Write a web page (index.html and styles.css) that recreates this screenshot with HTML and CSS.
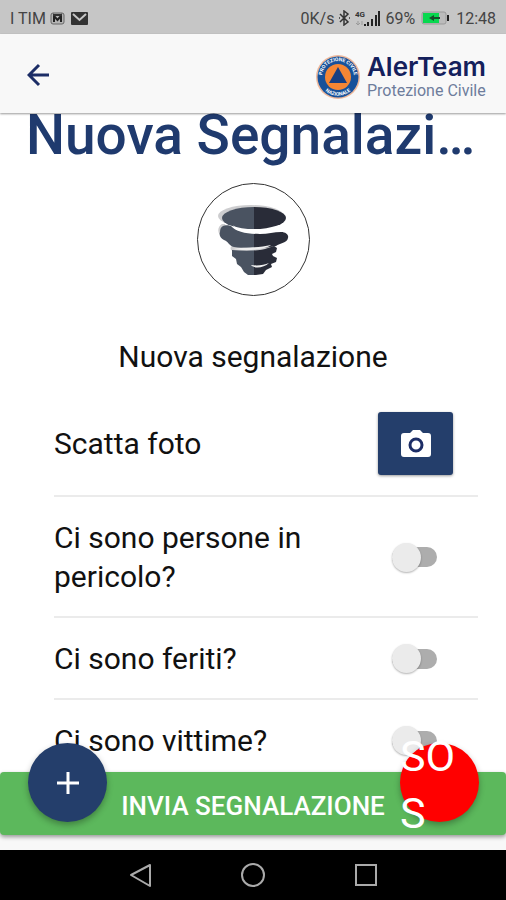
FILE: index.html
```html
<!DOCTYPE html>
<html lang="it">
<head>
  <meta charset="UTF-8">
  <meta name="viewport" content="width=device-width, initial-scale=1.0">
  <title>Nuova Segnalazione</title>
  <link rel="stylesheet" href="styles.css">
</head>
<body>
  <div class="status-bar">
    <div class="status-group">
      <span>I TIM</span>
      <svg width="15" height="13" viewBox="0 0 15 13"><rect x="1" y="1" width="13" height="11" rx="2" fill="#b5b5b5" stroke="#666"/><path d="M4 10V4l3.500 4L11 4v6" fill="none" stroke="#222" stroke-width="2"/><path d="M3 3h9" stroke="#333" stroke-width="2"/></svg>
      <svg class="mail" width="17" height="13" viewBox="0 0 17 13"><rect width="17" height="13" rx="1" fill="#333"/><path d="M2 2l6.500 6L15 2" fill="none" stroke="#c6c6c6" stroke-width="2"/></svg>
    </div>
    <div class="status-group">
      <span>0K/s</span>
      <svg width="13" height="16" viewBox="0 0 13 16"><path d="M2 4l8 8-4 3V1l4 3-8 8M1 8h1M11 8h1" fill="none" stroke="#333" stroke-width="1.500"/></svg>
      <svg width="26" height="17" viewBox="0 0 26 17"><text x="0" y="7" class="net">4G</text><path d="M3 11v4M1 13l2 2 2-2M7 15v-4" fill="none" stroke="#999"/><path d="M10 16v-2M13 16v-4M17 16V9M21 16V5M24 16V1" stroke="#222" stroke-width="2"/></svg>
      <span>69%</span>
      <svg class="battery" width="29" height="14" viewBox="0 0 29 14"><rect x="1" y="1" width="24" height="12" rx="2" fill="#bbb" stroke="#999"/><rect x="2" y="2" width="16" height="10" fill="#08d84f"/><path d="M8 7l5-3v2h6v2h-6v2z" fill="#174f2b"/><path d="M27 4v6" stroke="#222" stroke-width="2"/></svg>
      <span>12:48</span>
    </div>
  </div>

  <header class="toolbar">
    <a href="#" class="back" aria-label="Indietro">
      <svg width="24" height="24" viewBox="0 0 24 24"><path d="M12 2L2 12l10 10M2 12h20" fill="none" stroke="#1c2d66" stroke-width="3"/></svg>
    </a>
    <a href="#" class="logo">
      <svg width="46" height="46" viewBox="0 0 46 46">
        <circle cx="23" cy="23" r="22" fill="#eeb99c"/>
        <circle cx="23" cy="23" r="20.500" fill="#17519a"/>
        <circle cx="23" cy="23" r="13" fill="#f58634"/>
        <path d="M23 13l9 16H14z" fill="#173f82"/>
        <path id="arco-alto" d="M7.500 27A16 16 0 1 1 38.500 27" fill="none"/>
        <path id="arco-basso" d="M7 33A19 19 0 0 0 39 33" fill="none"/>
        <text class="seal"><textPath href="#arco-alto" startOffset="50%">PROTEZIONE CIVILE</textPath></text>
        <text class="seal"><textPath href="#arco-basso" startOffset="50%">NAZIONALE</textPath></text>
      </svg>
      <span class="logo-text">
        <span class="logo-name">AlerTeam</span>
        <span class="logo-sub">Protezione Civile</span>
      </span>
    </a>
  </header>

  <main class="content">
    <h1>Nuova Segnalazione</h1>
    <div class="event-icon">
      <svg width="72" height="72" viewBox="0 0 72 72">
        <defs>
          <linearGradient id="tono" gradientUnits="userSpaceOnUse" x1="0" y1="0" x2="72" y2="0">
            <stop offset="52%" stop-color="#4a5361"/>
            <stop offset="52%" stop-color="#292c38"/>
          </linearGradient>
        </defs>
        <g fill="#cdcdcf">
          <ellipse cx="34" cy="12" rx="33" ry="11"/>
          <path d="M5 20c-5 3-5 9 0 13l8 1-5-14zM14 46c-2-4 3-6 9-6h30l3 4-36 5z"/>
        </g>
        <ellipse cx="37" cy="14" rx="32" ry="11" fill="url(#tono)"/>
        <path fill="url(#tono)" d="M6 22c2-1 6-1 8 0 5 6 16 8 29 8 8 0 14-2 21-2 5 0 8 3 7 6-1 5-8 5-12 8-8 2-30 3-42 1-5-1-5-5-10-7-4-2-5-5-4-8 0-3 1-5 3-6z"/>
        <path fill="url(#tono)" d="M15 46c12 1 24 1 33-1l9-3 3 2-1 4-4 2 1 2 4 2-1 4-5 2 1 3-6 3-3 4-7 1h-8l-4-3-3-5-4-3-1-5-4-3z"/>
        <path d="M16 21c6 6 22 8 36 5-8 5-30 4-36-5z" fill="#fff"/>
        <path d="M16 45c10-2 26-1 38-4-6 5-26 6-38 4zM34 61c7 1 13 0 18-2-5 5-15 6-18 2z" fill="#eee"/>
      </svg>
    </div>
    <h2>Nuova segnalazione</h2>

    <div class="list">
      <div class="item">
        <span>Scatta foto</span>
        <button type="button" class="photo-btn" aria-label="Scatta foto">
          <svg width="32" height="28" viewBox="0 0 32 28"><path d="M4 3h6l3-3h7l3 3h5c2 0 3 1 3 3v18c0 2-1 3-3 3H4c-2 0-3-1-3-3V6c0-2 1-3 3-3z" fill="#fff"/><circle cx="16" cy="15" r="6" fill="#fff" stroke="#1c2d66" stroke-width="3"/></svg>
        </button>
      </div>
      <div class="item">
        <label for="pericolo">Ci sono persone in pericolo?</label>
        <input type="checkbox" class="toggle" id="pericolo">
      </div>
      <div class="item">
        <label for="feriti">Ci sono feriti?</label>
        <input type="checkbox" class="toggle" id="feriti">
      </div>
      <div class="item">
        <label for="vittime">Ci sono vittime?</label>
        <input type="checkbox" class="toggle" id="vittime">
      </div>
    </div>
  </main>

  <footer class="footer">
    <button type="button" class="send-btn">INVIA SEGNALAZIONE</button>
    <button type="button" class="fab fab-add" aria-label="Aggiungi">
      <svg width="24" height="24" viewBox="0 0 24 24"><path d="M12 1v22M1 12h22" stroke="#fff" stroke-width="3"/></svg>
    </button>
    <button type="button" class="fab fab-sos"><span>SOS</span></button>
  </footer>

  <nav class="android-nav">
    <button type="button" aria-label="Indietro">
      <svg width="26" height="26" viewBox="0 0 26 26"><path d="M23 3v21L4 13z" fill="none" stroke="#aaa" stroke-width="2" stroke-linejoin="round"/></svg>
    </button>
    <button type="button" aria-label="Home">
      <svg width="26" height="26" viewBox="0 0 26 26"><circle cx="13" cy="13" r="11" fill="none" stroke="#aaa" stroke-width="2"/></svg>
    </button>
    <button type="button" aria-label="Recenti">
      <svg width="26" height="26" viewBox="0 0 26 26"><rect x="3" y="3" width="20" height="20" fill="none" stroke="#aaa" stroke-width="2"/></svg>
    </button>
  </nav>
</body>
</html>
```
FILE: styles.css
```css
* {
  box-sizing: border-box;
}

body {
  margin: 0;
  height: 100vh;
  display: flex;
  flex-direction: column;
  overflow: hidden;
  font-family: Roboto, sans-serif;
  color: #111;
  background-color: white;
}

button {
  border: none;
  padding: 0;
  font-family: inherit;
  cursor: pointer;
}

svg {
  display: block;
}

.status-bar {
  flex: none;
  height: 34px;
  padding: 2px 10px 0;
  display: flex;
  align-items: center;
  justify-content: space-between;
  background-color: #c6c6c6;
  color: #444;
  font-size: 16px;
}

.status-group {
  display: flex;
  align-items: center;
  gap: 4px;
}

.mail {
  margin-left: 2px;
}

.battery {
  margin: 0 2px;
}

.net {
  font-size: 8px;
  font-weight: bold;
  fill: #333;
}

.toolbar {
  flex: none;
  height: 79px;
  padding: 2px 20px 0 27px;
  display: flex;
  align-items: center;
  justify-content: space-between;
  background-color: #f8f8f8;
  box-shadow: 0 1px 2px rgba(0, 0, 0, 0.4);
  z-index: 1;
}

.logo {
  display: flex;
  align-items: center;
  gap: 6px;
  padding-top: 4px;
  text-decoration: none;
}

.logo-text {
  display: flex;
  flex-direction: column;
}

.logo-name {
  font-family: Inter, sans-serif;
  font-size: 26px;
  line-height: 28px;
  font-weight: 600;
  color: #14205c;
}

.logo-sub {
  font-size: 16px;
  line-height: 20px;
  color: #6e7d9c;
}

.seal {
  font-size: 5px;
  font-weight: bold;
  fill: white;
  text-anchor: middle;
}

.content {
  flex: 1;
  min-height: 0;
  overflow: hidden;
}

h1 {
  margin: 0;
  padding: 0 26px 12px;
  font-size: 55px;
  line-height: 44px;
  font-weight: 500;
  color: #1f3a6e;
  white-space: nowrap;
  overflow: hidden;
  text-overflow: ellipsis;
}

.event-icon {
  width: 113px;
  height: 113px;
  margin: 14px auto 0;
  display: flex;
  align-items: center;
  justify-content: center;
  border: 1px solid #333;
  border-radius: 50%;
}

h2 {
  margin: 41px 0 15px;
  text-align: center;
  font-size: 30px;
  line-height: 39px;
  font-weight: 400;
}

.list {
  padding: 0 28px 0 54px;
}

.item {
  padding: 21px 25px 20px 0;
  display: flex;
  align-items: center;
  justify-content: space-between;
  border-bottom: 2px solid #ebebeb;
  font-size: 30px;
  line-height: 39px;
}

.item:last-child {
  border-bottom: none;
}

.item label {
  max-width: 270px;
}

.photo-btn {
  width: 75px;
  height: 63px;
  display: flex;
  align-items: center;
  justify-content: center;
  background-color: #243e6b;
  border-radius: 3px;
  box-shadow: 0 1px 3px rgba(0, 0, 0, 0.4);
}

.toggle {
  appearance: none;
  width: 45px;
  height: 20px;
  margin: 0 16px 0 0;
  display: flex;
  align-items: center;
  background-color: #adadad;
  border-radius: 10px;
}

.toggle::before {
  content: "";
  flex: none;
  width: 29px;
  height: 29px;
  border-radius: 50%;
  background-color: #ebebeb;
  box-shadow: 0 1px 2px rgba(0, 0, 0, 0.3);
}

.toggle:checked {
  justify-content: flex-end;
  background-color: #5cb85c;
}

.footer {
  flex: none;
  position: relative;
  padding-bottom: 15px;
  background-color: #f8f8f8;
}

.send-btn {
  width: 100%;
  height: 63px;
  padding-top: 4px;
  display: block;
  background-color: #5cb85c;
  border-radius: 4px;
  box-shadow: 0 2px 4px rgba(0, 0, 0, 0.4);
  color: white;
  font-size: 26px;
  font-weight: 500;
}

.fab {
  position: absolute;
  top: -29px;
  width: 79px;
  height: 79px;
  display: flex;
  align-items: center;
  justify-content: center;
  border-radius: 50%;
  box-shadow: 0 3px 6px rgba(0, 0, 0, 0.3);
}

.fab-add {
  left: 28px;
  background-color: #243e6b;
}

.fab-sos {
  right: 27px;
  padding-top: 4px;
  background-color: red;
  color: white;
  font-size: 43px;
  line-height: 57px;
  text-align: left;
  word-break: break-all;
}

.android-nav {
  flex: none;
  height: 50px;
  display: flex;
  align-items: center;
  justify-content: center;
  gap: 87px;
  background-color: black;
}

.android-nav button {
  background: none;
}
```
